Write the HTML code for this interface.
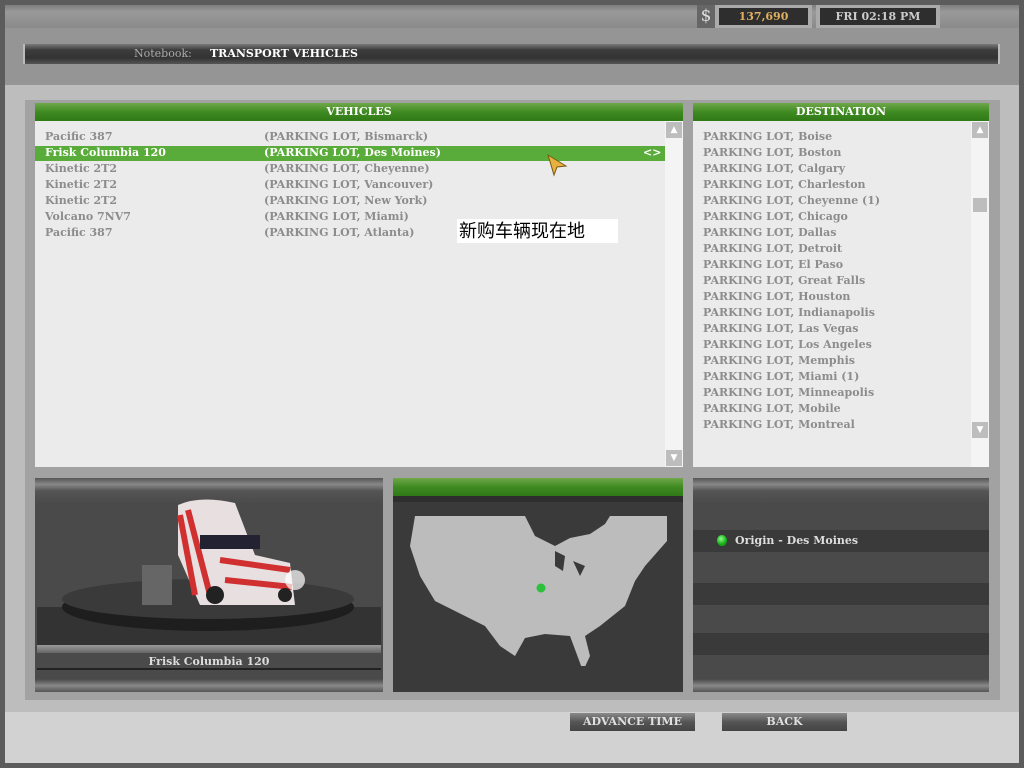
<!DOCTYPE html>
<html><head><meta charset="utf-8"><style>
*{margin:0;padding:0;box-sizing:border-box}
body{width:1024px;height:768px;background:#5c5c5c;position:relative;overflow:hidden;font-family:"DejaVu Serif","Liberation Serif",serif;}
.a{position:absolute}
.t{font-size:11px;font-weight:bold;color:#8c8c8c;white-space:nowrap;line-height:16px}
.hdr{background:linear-gradient(#6fa84a,#3f8a22 50%,#2f7a16);color:#fff;font-size:11px;font-weight:bold;text-align:center;line-height:18px}
.dark{background:linear-gradient(#7a7a7a,#3c3c3c 30%,#333 70%,#555)}
.sb{background:#f4f4f4}
.arr{background:#bdbdbd;width:16px;height:16px}
.btn{background:linear-gradient(#8a8a8a,#555 50%,#444);color:#e0e0e0;font-size:11px;font-weight:bold;text-align:center;line-height:18px}
</style></head><body>
<div class="a" style="left:5px;top:5px;width:1014px;height:80px;background:#959595"></div>
<div class="a" style="left:5px;top:5px;width:1014px;height:23px;background:linear-gradient(#7e7e7e,#9a9a9a 30%,#8a8a8a)"></div>
<div class="a" style="left:697px;top:5px;width:18px;height:23px;background:#666;color:#ddd;font-size:17px;text-align:center;line-height:23px">$</div>
<div class="a" style="left:715px;top:5px;width:97px;height:23px;background:#aaa"></div>
<div class="a" style="left:719px;top:8px;width:89px;height:17px;background:#2e2e2e;color:#e0b060;font-size:11px;font-weight:bold;text-align:center;line-height:17px">137,690</div>
<div class="a" style="left:816px;top:5px;width:124px;height:23px;background:#aaa"></div>
<div class="a" style="left:820px;top:8px;width:116px;height:17px;background:#2e2e2e;color:#ccc;font-size:11px;font-weight:bold;text-align:center;line-height:17px">FRI 02:18 PM</div>
<div class="a dark" style="left:23px;top:44px;width:977px;height:20px;border-left:2px solid #bbb;border-right:2px solid #bbb"></div>
<div class="a" style="left:134px;top:46px;font-size:11px;color:#aaa;line-height:16px">Notebook:</div>
<div class="a" style="left:210px;top:46px;font-size:11px;color:#fff;font-weight:bold;line-height:16px">TRANSPORT VEHICLES</div>
<div class="a" style="left:5px;top:85px;width:1014px;height:627px;background:#bdbdbd"></div>
<div class="a" style="left:25px;top:100px;width:975px;height:600px;background:#a2a2a2"></div>
<div class="a" style="left:5px;top:712px;width:1014px;height:51px;background:#d2d2d2"></div>
<!-- vehicles -->
<div class="a hdr" style="left:35px;top:103px;width:648px;height:18px">VEHICLES</div>
<div class="a" style="left:35px;top:121px;width:630px;height:346px;background:#ebebeb"></div>
<div class="a sb" style="left:665px;top:121px;width:18px;height:346px"></div>
<div class="a arr" style="left:666px;top:122px;color:#fff;font-size:9px;text-align:center;line-height:16px">▲</div>
<div class="a arr" style="left:666px;top:450px;color:#fff;font-size:9px;text-align:center;line-height:16px">▼</div>
<div class="a" style="left:35px;top:146px;width:630px;height:15px;background:#5aac3a"></div>
<div class="a t" style="left:45px;top:129px">Pacific 387<br><span style="color:#fff">Frisk Columbia 120</span><br>Kinetic 2T2<br>Kinetic 2T2<br>Kinetic 2T2<br>Volcano 7NV7<br>Pacific 387</div>
<div class="a t" style="left:264px;top:129px">(PARKING LOT, Bismarck)<br><span style="color:#fff">(PARKING LOT, Des Moines)</span><br>(PARKING LOT, Cheyenne)<br>(PARKING LOT, Vancouver)<br>(PARKING LOT, New York)<br>(PARKING LOT, Miami)<br>(PARKING LOT, Atlanta)</div>
<div class="a t" style="left:643px;top:145px;color:#fff">&lt;&gt;</div>
<svg class="a" style="left:546px;top:153px" width="22" height="24"><path d="M2 2 L20 13 L11 14 L8 22 Z" fill="#e8b040" stroke="#7a5a10"/></svg>
<div class="a" style="left:457px;top:219px;width:161px;height:24px;background:#fff;color:#000;font-family:'Liberation Sans','Noto Sans CJK SC',sans-serif;font-size:18px;line-height:24px;padding-left:2px">新购车辆现在地</div>
<!-- destination -->
<div class="a hdr" style="left:693px;top:103px;width:296px;height:18px">DESTINATION</div>
<div class="a" style="left:693px;top:121px;width:278px;height:346px;background:#ebebeb"></div>
<div class="a sb" style="left:971px;top:121px;width:18px;height:346px"></div>
<div class="a arr" style="left:972px;top:122px;color:#fff;font-size:9px;text-align:center;line-height:16px">▲</div>
<div class="a" style="left:973px;top:198px;width:14px;height:14px;background:#bdbdbd"></div>
<div class="a arr" style="left:972px;top:422px;color:#fff;font-size:9px;text-align:center;line-height:16px">▼</div>
<div class="a t" style="left:703px;top:129px">PARKING LOT, Boise<br>PARKING LOT, Boston<br>PARKING LOT, Calgary<br>PARKING LOT, Charleston<br>PARKING LOT, Cheyenne (1)<br>PARKING LOT, Chicago<br>PARKING LOT, Dallas<br>PARKING LOT, Detroit<br>PARKING LOT, El Paso<br>PARKING LOT, Great Falls<br>PARKING LOT, Houston<br>PARKING LOT, Indianapolis<br>PARKING LOT, Las Vegas<br>PARKING LOT, Los Angeles<br>PARKING LOT, Memphis<br>PARKING LOT, Miami (1)<br>PARKING LOT, Minneapolis<br>PARKING LOT, Mobile<br>PARKING LOT, Montreal</div>
<!-- truck panel -->
<div class="a" style="left:35px;top:478px;width:348px;height:214px;background:linear-gradient(#555,#888 3%,#555 6%,#4a4a4a 12%,#4a4a4a 94%,#888 97%,#555)"></div>
<div class="a" style="left:37px;top:607px;width:344px;height:38px;background:#333"></div>
<svg class="a" style="left:60px;top:495px" width="300" height="140">
<ellipse cx="148" cy="112" rx="146" ry="24" fill="#1e1e1e"/>
<ellipse cx="148" cy="104" rx="146" ry="20" fill="#3a3a3a"/>
<rect x="82" y="70" width="30" height="40" fill="#666"/>
<path d="M118 10 Q140 0 175 8 L195 60 L230 68 L235 110 L140 110 L118 60 Z" fill="#e8e0e0"/>
<path d="M120 20 L135 100 M128 15 L150 100 M160 65 L230 75 M165 85 L232 92" stroke="#d03030" stroke-width="6"/>
<rect x="140" y="40" width="60" height="14" fill="#223" />
<circle cx="155" cy="100" r="9" fill="#222"/><circle cx="225" cy="100" r="7" fill="#222"/>
<circle cx="235" cy="85" r="10" fill="#fff" opacity=".7"/>
</svg>
<div class="a" style="left:37px;top:645px;width:344px;height:8px;background:linear-gradient(#999,#666)"></div>
<div class="a" style="left:37px;top:653px;width:344px;height:17px;background:#4a4a4a;border-bottom:2px solid #222;color:#ddd;font-size:11px;font-weight:bold;text-align:center;line-height:17px">Frisk Columbia 120</div>
<!-- map -->
<div class="a" style="left:393px;top:478px;width:290px;height:214px;background:#3a3a3a"></div>
<div class="a hdr" style="left:393px;top:478px;width:290px;height:18px"></div>
<div class="a" style="left:393px;top:496px;width:290px;height:6px;background:#2e2e2e"></div>
<svg class="a" style="left:405px;top:516px" width="262" height="150">
<path d="M10 0 L120 0 L130 20 L150 30 L165 22 L185 18 L200 8 L205 0 L262 0 L262 25 L240 50 L230 65 L220 90 L195 110 L180 120 L185 140 L178 155 L165 120 L140 118 L120 122 L110 140 L95 130 L80 110 L60 100 L30 85 L15 60 L5 30 Z" fill="#bcbcbc"/>
<path d="M150 35 L160 40 L158 55 L150 50 Z M168 45 L180 50 L175 60 Z" fill="#3a3a3a"/>
<circle cx="136" cy="72" r="4.5" fill="#2cc03c"/>
</svg>
<!-- origin panel -->
<div class="a" style="left:693px;top:478px;width:296px;height:214px;background:linear-gradient(#555,#888 3%,#555 6%,#4a4a4a 12%,#4a4a4a 94%,#888 97%,#555)"></div>
<div class="a" style="left:693px;top:530px;width:296px;height:22px;background:#3a3a3a"></div>
<div class="a" style="left:693px;top:583px;width:296px;height:22px;background:#3a3a3a"></div>
<div class="a" style="left:693px;top:633px;width:296px;height:22px;background:#3a3a3a"></div>
<div class="a" style="left:717px;top:535px;width:10px;height:11px;border-radius:50%;background:radial-gradient(circle at 40% 35%,#8f8,#1a1 60%)"></div>
<div class="a" style="left:735px;top:533px;font-size:11px;font-weight:bold;color:#ddd;line-height:16px">Origin - Des Moines</div>
<!-- buttons -->
<div class="a btn" style="left:570px;top:713px;width:125px;height:18px">ADVANCE TIME</div>
<div class="a btn" style="left:722px;top:713px;width:125px;height:18px">BACK</div>
</body></html>
